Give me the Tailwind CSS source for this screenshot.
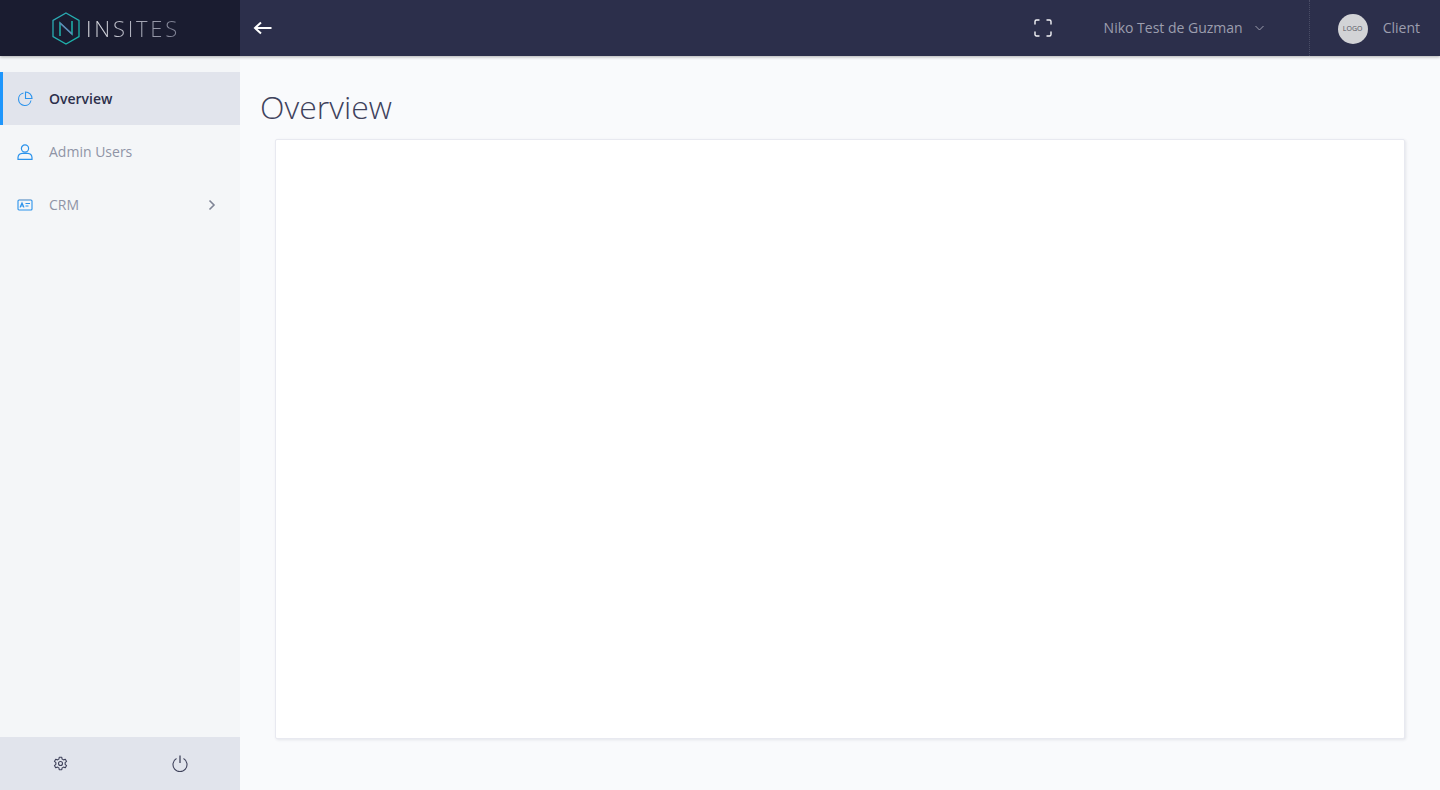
<!DOCTYPE html>
<html lang="en">
<head>
    <meta charset="UTF-8">
    <title>Insites - Overview</title>
    <script src="https://cdn.jsdelivr.net/npm/@tailwindcss/browser@4"></script>
</head>
<body class="h-[790px] overflow-hidden bg-[#f9fafc] font-['Open_Sans',sans-serif]">
    <!-- top bar -->
    <header class="relative z-10 flex h-14 bg-[#2c2f4b] shadow-[0_1px_3px_rgba(0,0,0,0.3)]">
        <div class="flex w-60 items-center justify-center gap-[6px] bg-[#1a1c30] pr-[8px]">
            <svg width="28" height="33" viewBox="0 0 28 33" fill="none">
                <defs>
                    <linearGradient id="hex" x1="0" y1="0" x2="1" y2="1">
                        <stop offset="0" stop-color="#2fa7b5"/>
                        <stop offset="1" stop-color="#17b5a8"/>
                    </linearGradient>
                </defs>
                <path d="M14 1 L27 8.5 V24.5 L14 32 L1 24.5 V8.5 Z" stroke="url(#hex)" stroke-width="1.3"/>
                <path d="M8 24 V11 L20 22 V9" stroke="#1fb4ad" stroke-width="1.5"/>
                <path d="M8 11 L20 22" stroke="#6d7fb5" stroke-width="1.2"/>
            </svg>
            <span class="bg-gradient-to-r from-[#e6e7ec] to-[#7a7c8f] bg-clip-text text-[22px] leading-none font-light tracking-[2.8px] text-transparent">INSITES</span>
        </div>
        <div class="flex flex-1 items-center pr-5 pl-[13px]">
            <svg width="19" height="14" viewBox="0 0 19 14" fill="none" stroke="white" stroke-width="2">
                <path d="M18.5 7 H2 M8 1.5 L2 7 L8 12.5"/>
            </svg>
            <div class="ml-auto flex items-center">
                <svg width="18" height="18" viewBox="0 0 18 18" fill="none" stroke="#f3f4f7" stroke-width="1.4" stroke-linecap="round">
                    <path d="M1 5 V2.5 A1.5 1.5 0 0 1 2.5 1 H5 M13 1 H15.5 A1.5 1.5 0 0 1 17 2.5 V5 M17 13 V15.5 A1.5 1.5 0 0 1 15.5 17 H13 M5 17 H2.5 A1.5 1.5 0 0 1 1 15.5 V13"/>
                </svg>
                <span class="ml-[52px] text-sm text-[#9c9eae]">Niko Test de Guzman</span>
                <svg class="ml-[12px]" width="9" height="6" viewBox="0 0 9 6" fill="none" stroke="#9c9eae" stroke-width="1">
                    <path d="M0.5 1 L4.5 5 L8.5 1"/>
                </svg>
                <div class="ml-[45px] h-14 border-l border-dotted border-[#4a4d66]"></div>
                <div class="mt-0.5 ml-7 flex h-[30px] w-[30px] items-center justify-center rounded-full bg-[#d2d3d6] text-[7px] text-[#55565f]">LOGO</div>
                <span class="ml-[15px] text-sm text-[#9c9eae]">Client</span>
            </div>
        </div>
    </header>

    <div class="flex h-[734px]">
        <!-- sidebar -->
        <aside class="flex w-60 flex-col bg-[#f4f6f8]">
            <nav class="flex-1 pt-4">
                <a class="flex h-[53px] items-center gap-4 border-l-[3px] border-[#1e96fc] bg-[#e1e4ec] pl-[14px] text-sm font-semibold text-[#2c2f4b]">
                    <svg width="16" height="16" viewBox="0 0 16 16" fill="none" stroke="#2b93ec" stroke-width="1.1">
                        <path d="M6.5 2 A6.3 6.3 0 1 0 14 9.5"/>
                        <path d="M8.5 1 A6.5 6.5 0 0 1 15 7.5 H8.5 Z"/>
                    </svg>
                    Overview
                </a>
                <a class="flex h-[53px] items-center gap-4 pl-[17px] text-sm text-[#8f94a6]">
                    <svg width="16" height="16" viewBox="0 0 16 16" fill="none" stroke="#2b93ec" stroke-width="1.2">
                        <circle cx="8" cy="4.5" r="3.6"/>
                        <path d="M1 15.4 V13.5 A4.5 4.5 0 0 1 5.2 9.4 H10.8 A4.5 4.5 0 0 1 15 13.5 V15.4 Z"/>
                    </svg>
                    Admin Users
                </a>
                <a class="flex h-[53px] items-center gap-4 pr-6 pl-[17px] text-sm text-[#8f94a6]">
                    <svg width="16" height="16" viewBox="0 0 16 16" fill="none" stroke="#2b93ec" stroke-width="1.1">
                        <rect x="1" y="3" width="14" height="10" rx="1"/>
                        <path d="M2 2.8 H14" stroke="#9cb6d2"/>
                        <path d="M3 10.5 L5 5.8 L7 10.5 M3.8 9 H6.2 M8.5 6.5 H13 M8.5 9 H11.5"/>
                    </svg>
                    CRM
                    <svg class="ml-auto" width="8" height="12" viewBox="0 0 8 12" fill="none" stroke="#7f8496" stroke-width="1.6">
                        <path d="M1.5 1.5 L6 6 L1.5 10.5"/>
                    </svg>
                </a>
            </nav>
            <div class="flex h-[53px] bg-[#e1e4ec]">
                <button class="flex w-1/2 items-center justify-center">
                    <svg width="15" height="15" viewBox="0 0 24 24" fill="none" stroke="#40435c" stroke-width="1.8" stroke-linejoin="round">
                        <circle cx="12" cy="12" r="3.2"/>
                        <path d="M10 2 h4 l.6 3 2.2 1.2 2.9-1 2 3.5-2.3 2 v2.6 l2.3 2-2 3.5-2.9-1 -2.2 1.2 -.6 3 h-4 l-.6-3 -2.2-1.2 -2.9 1-2-3.5 2.3-2 v-2.6 l-2.3-2 2-3.5 2.9 1 2.2-1.2 z"/>
                    </svg>
                </button>
                <button class="flex w-1/2 items-center justify-center">
                    <svg width="16" height="17" viewBox="0 0 16 17" fill="none" stroke="#40435c" stroke-width="1.1">
                        <path d="M4.5 3.6 A7 7 0 1 0 11.5 3.6"/>
                        <path d="M8 0.5 V8" stroke-width="1.3"/>
                    </svg>
                </button>
            </div>
        </aside>

        <!-- content -->
        <main class="flex-1 pt-[29px]">
            <h1 class="pl-5 text-[32px] leading-[44px] font-light text-[#3f425c]">Overview</h1>
            <div class="mt-[10px] mr-[35px] ml-[35px] h-[600px] rounded-[2px] border border-[#e8e9f0] bg-white shadow-[1px_1px_3px_rgba(44,47,75,0.1)]"></div>
        </main>
    </div>
</body>
</html>
